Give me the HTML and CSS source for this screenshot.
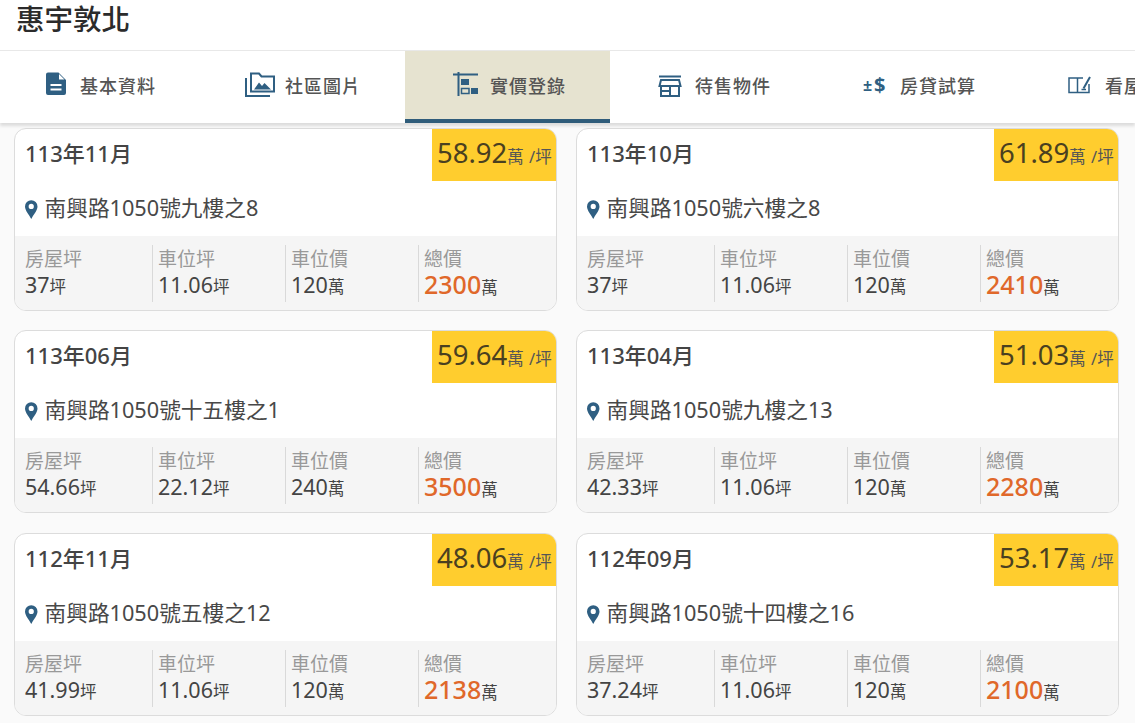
FILE: index.html
```html
<!DOCTYPE html>
<html lang="zh-Hant">
<head>
<meta charset="utf-8">
<title>惠宇敦北</title>
<link rel="stylesheet" href="styles.css">
</head>
<body>
<header class="top"><h1 class="title">惠宇敦北</h1></header>
<nav class="tabs">
  <a class="tab">
    <svg class="ico" viewBox="0 0 30 30"><path class="fill" fill-rule="evenodd" d="M8 2.500h10.500L26 10V23a2 2 0 0 1-2 2H8a2 2 0 0 1-2-2V4.500a2 2 0 0 1 2-2zM19 4V9.500h5.500zM10.500 14v2h11v-2zM10.500 18.500v2h11v-2z"/></svg>
    <span>基本資料</span>
  </a>
  <a class="tab">
    <svg class="ico" viewBox="0 0 30 30"><path class="line" d="M1 8V26H25"/><path class="line" d="M6 21.500V3.500H14L16.500 6.500H29V21.500Z"/><path class="fill" d="M9 19.500L14 12.500L17 16L19.500 13L26 19.500Z"/></svg>
    <span>社區圖片</span>
  </a>
  <a class="tab tab-active">
    <svg class="ico" viewBox="0 0 30 30"><path class="line" d="M3 4.500H28M8.500 2V26"/><path class="line thin" d="M11.500 18.500H19V23.500H11.500Z"/><rect class="fill" x="11" y="9" width="8" height="6"/><rect class="fill" x="21" y="18" width="7" height="6"/></svg>
    <span>實價登錄</span>
  </a>
  <a class="tab">
    <svg class="ico" viewBox="0 0 30 30"><path class="line" d="M4 6.500H26"/><path class="line" d="M6 10H24L25.500 16H4.500Z"/><path class="line" d="M6 16V26H24V16M6 21H15V26M15 16V21"/></svg>
    <span>待售物件</span>
  </a>
  <a class="tab">
    <svg class="ico" viewBox="0 0 30 30"><text class="calc calc-sm" x="3" y="21">±</text><text class="calc" x="14" y="22">$</text></svg>
    <span>房貸試算</span>
  </a>
  <a class="tab">
    <svg class="ico" viewBox="0 0 30 30"><path class="line thin" d="M4 8H12.500V22.500H4ZM12.500 8V22.500H24V14M12.500 8H18"/><path class="line" d="M18.500 18.500L25 7"/><path class="line thin" d="M16.500 19.500H21"/></svg>
    <span>看屋筆記</span>
  </a>
</nav>
<main class="list">
  <article class="card">
    <div class="head"><span class="date">113年11月</span><span class="price"><b>58.92</b>萬 /坪</span></div>
    <p class="addr"><svg class="pin" viewBox="0 0 12 18"><path fill-rule="evenodd" d="M6 0a6 6 0 0 1 6 6c0 4-4 8-6 12C4 14 0 10 0 6a6 6 0 0 1 6-6zM6 3.500a2.500 2.500 0 1 0 0 5 2.500 2.500 0 0 0 0-5z"/></svg>南興路1050號九樓之8</p>
    <dl class="stats">
      <div class="stat"><dt>房屋坪</dt><dd>37<small>坪</small></dd></div>
      <div class="stat"><dt>車位坪</dt><dd>11.06<small>坪</small></dd></div>
      <div class="stat"><dt>車位價</dt><dd>120<small>萬</small></dd></div>
      <div class="stat"><dt>總價</dt><dd><em>2300</em><small>萬</small></dd></div>
    </dl>
  </article>
  <article class="card">
    <div class="head"><span class="date">113年10月</span><span class="price"><b>61.89</b>萬 /坪</span></div>
    <p class="addr"><svg class="pin" viewBox="0 0 12 18"><path fill-rule="evenodd" d="M6 0a6 6 0 0 1 6 6c0 4-4 8-6 12C4 14 0 10 0 6a6 6 0 0 1 6-6zM6 3.500a2.500 2.500 0 1 0 0 5 2.500 2.500 0 0 0 0-5z"/></svg>南興路1050號六樓之8</p>
    <dl class="stats">
      <div class="stat"><dt>房屋坪</dt><dd>37<small>坪</small></dd></div>
      <div class="stat"><dt>車位坪</dt><dd>11.06<small>坪</small></dd></div>
      <div class="stat"><dt>車位價</dt><dd>120<small>萬</small></dd></div>
      <div class="stat"><dt>總價</dt><dd><em>2410</em><small>萬</small></dd></div>
    </dl>
  </article>
  <article class="card">
    <div class="head"><span class="date">113年06月</span><span class="price"><b>59.64</b>萬 /坪</span></div>
    <p class="addr"><svg class="pin" viewBox="0 0 12 18"><path fill-rule="evenodd" d="M6 0a6 6 0 0 1 6 6c0 4-4 8-6 12C4 14 0 10 0 6a6 6 0 0 1 6-6zM6 3.500a2.500 2.500 0 1 0 0 5 2.500 2.500 0 0 0 0-5z"/></svg>南興路1050號十五樓之1</p>
    <dl class="stats">
      <div class="stat"><dt>房屋坪</dt><dd>54.66<small>坪</small></dd></div>
      <div class="stat"><dt>車位坪</dt><dd>22.12<small>坪</small></dd></div>
      <div class="stat"><dt>車位價</dt><dd>240<small>萬</small></dd></div>
      <div class="stat"><dt>總價</dt><dd><em>3500</em><small>萬</small></dd></div>
    </dl>
  </article>
  <article class="card">
    <div class="head"><span class="date">113年04月</span><span class="price"><b>51.03</b>萬 /坪</span></div>
    <p class="addr"><svg class="pin" viewBox="0 0 12 18"><path fill-rule="evenodd" d="M6 0a6 6 0 0 1 6 6c0 4-4 8-6 12C4 14 0 10 0 6a6 6 0 0 1 6-6zM6 3.500a2.500 2.500 0 1 0 0 5 2.500 2.500 0 0 0 0-5z"/></svg>南興路1050號九樓之13</p>
    <dl class="stats">
      <div class="stat"><dt>房屋坪</dt><dd>42.33<small>坪</small></dd></div>
      <div class="stat"><dt>車位坪</dt><dd>11.06<small>坪</small></dd></div>
      <div class="stat"><dt>車位價</dt><dd>120<small>萬</small></dd></div>
      <div class="stat"><dt>總價</dt><dd><em>2280</em><small>萬</small></dd></div>
    </dl>
  </article>
  <article class="card">
    <div class="head"><span class="date">112年11月</span><span class="price"><b>48.06</b>萬 /坪</span></div>
    <p class="addr"><svg class="pin" viewBox="0 0 12 18"><path fill-rule="evenodd" d="M6 0a6 6 0 0 1 6 6c0 4-4 8-6 12C4 14 0 10 0 6a6 6 0 0 1 6-6zM6 3.500a2.500 2.500 0 1 0 0 5 2.500 2.500 0 0 0 0-5z"/></svg>南興路1050號五樓之12</p>
    <dl class="stats">
      <div class="stat"><dt>房屋坪</dt><dd>41.99<small>坪</small></dd></div>
      <div class="stat"><dt>車位坪</dt><dd>11.06<small>坪</small></dd></div>
      <div class="stat"><dt>車位價</dt><dd>120<small>萬</small></dd></div>
      <div class="stat"><dt>總價</dt><dd><em>2138</em><small>萬</small></dd></div>
    </dl>
  </article>
  <article class="card">
    <div class="head"><span class="date">112年09月</span><span class="price"><b>53.17</b>萬 /坪</span></div>
    <p class="addr"><svg class="pin" viewBox="0 0 12 18"><path fill-rule="evenodd" d="M6 0a6 6 0 0 1 6 6c0 4-4 8-6 12C4 14 0 10 0 6a6 6 0 0 1 6-6zM6 3.500a2.500 2.500 0 1 0 0 5 2.500 2.500 0 0 0 0-5z"/></svg>南興路1050號十四樓之16</p>
    <dl class="stats">
      <div class="stat"><dt>房屋坪</dt><dd>37.24<small>坪</small></dd></div>
      <div class="stat"><dt>車位坪</dt><dd>11.06<small>坪</small></dd></div>
      <div class="stat"><dt>車位價</dt><dd>120<small>萬</small></dd></div>
      <div class="stat"><dt>總價</dt><dd><em>2100</em><small>萬</small></dd></div>
    </dl>
  </article>
</main>
</body>
</html>
```

FILE: styles.css
```css
* { box-sizing: border-box; }

html, body {
  margin: 0;
  height: 100%;
  overflow: hidden;
}

body {
  background: #fafafa;
  color: #444;
  font-family: "Noto Sans", "Noto Sans CJK TC", sans-serif;
}

.top {
  height: 51px;
  padding-left: 16px;
  background: #fff;
  border-bottom: 1px solid #e8e8e8;
}

.title {
  margin: 0;
  font-size: 28.500px;
  font-weight: 500;
  line-height: 39px;
  color: #2b2b2b;
}

.tabs {
  display: flex;
  height: 72px;
  background: #fff;
  overflow: hidden;
  box-shadow: 0 3px 3px rgba(0, 0, 0, .12);
  position: relative;
}

.tab {
  flex: 0 0 205px;
  display: flex;
  align-items: center;
  gap: 10px;
  padding: 0 0 4px 45px;
  font-size: 18px;
  font-weight: 500;
  letter-spacing: 1px;
  color: #555;
  white-space: nowrap;
}

.tab:first-child {
  flex-basis: 200px;
  padding-left: 40px;
}

.tab-active {
  background: #e6e3d0;
  border-bottom: 4px solid #2f5c7a;
  padding-bottom: 0;
}

.ico {
  flex: none;
  width: 30px;
  height: 30px;
}

.fill { fill: #2f5f82; }

.line {
  fill: none;
  stroke: #2f5f82;
  stroke-width: 2;
}

.thin { stroke-width: 1.500; }

.calc {
  fill: #2f5f82;
  font-size: 20px;
  font-weight: 700;
}

.calc-sm { font-size: 16px; }

.list {
  display: grid;
  grid-template-columns: 543px 543px;
  column-gap: 19px;
  row-gap: 19.400px;
  padding: 5px 0 0 14px;
}

.card {
  display: flex;
  flex-direction: column;
  height: 183px;
  background: #fff;
  border: 1px solid #dcdcdc;
  border-radius: 12px;
  overflow: hidden;
}

.head {
  flex: none;
  display: flex;
  justify-content: space-between;
  height: 52px;
}

.date {
  padding: 8px 0 0 10px;
  font-size: 22px;
  font-weight: 500;
  line-height: 32px;
  color: #444;
}

.price {
  width: 124px;
  padding: 4px 0 0 5px;
  background: #ffcd2e;
  font-size: 16.500px;
  line-height: 40px;
  word-spacing: 1px;
  color: #555;
  white-space: nowrap;
}

.price b {
  font-size: 27.500px;
  font-weight: 400;
  color: #4a4020;
}

.addr {
  flex: none;
  display: flex;
  align-items: center;
  gap: 7px;
  height: 55px;
  margin: 0;
  padding: 0 0 4px 10px;
  font-size: 21.700px;
  color: #484848;
}

.pin {
  flex: none;
  width: 12.500px;
  height: 19px;
  margin-top: 6px;
  fill: #2f5f82;
}

.stats {
  flex: none;
  display: grid;
  grid-template-columns: 137px 133px 133px 1fr;
  height: 74px;
  margin: 0;
  padding: 9px 0 8px;
  background: #f5f5f5;
}

.stat {
  padding-left: 5px;
  border-left: 1px solid #d9d9d9;
}

.stat:first-child {
  padding-left: 10px;
  border-left: 0;
}

.stat dt {
  font-size: 19px;
  line-height: 29px;
  color: #999;
}

.stat dd {
  height: 24px;
  margin: 0;
  font-size: 21.500px;
  line-height: 21px;
  color: #444;
  white-space: nowrap;
}

.stat small { font-size: 16.500px; }

.stat em {
  font-size: 25px;
  font-style: normal;
  font-weight: 500;
  color: #e0682a;
}
```
